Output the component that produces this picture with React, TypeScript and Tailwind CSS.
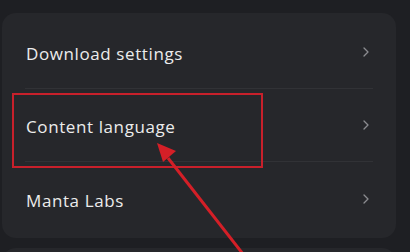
import React from "react";

const rows = ["Download settings", "Content language", "Manta Labs"];

const Chevron: React.FC = () => (
    <svg width="8" height="12" viewBox="0 0 8 12" fill="none" className="shrink-0">
        <path d="M2 2l4 4-4 4" stroke="#8b8c90" strokeWidth="1.3" strokeLinecap="round" strokeLinejoin="round" />
    </svg>
);

const App: React.FC = () => {
    return (
        <div className="relative w-[410px] h-[252px] overflow-hidden bg-[#1e1f23] pt-[13px] pl-[2px] font-['Open_Sans',sans-serif]">
            <div className="w-[394px] h-[225px] rounded-[14px] bg-[#26272b] pt-[3px] pl-[23px] pr-[23px]">
                {rows.map((label, i) => (
                    <div
                        key={label}
                        className={
                            "flex items-center justify-between h-[73px] pr-[3px] " +
                            (i < rows.length - 1 ? "border-b border-[#313236]" : "")
                        }
                    >
                        <span className="text-[17px] tracking-[0.6px] text-[#ececec] pl-px pt-[4px]">{label}</span>
                        <Chevron />
                    </div>
                ))}
            </div>
            <div className="mt-[10px] w-[394px] h-[20px] rounded-t-[14px] bg-[#26272b]" />

            {/* annotation */}
            <div className="absolute left-[12px] top-[93px] w-[251px] h-[75px] border-2 border-[#c8202b]" />
            <svg className="absolute left-0 top-0" width="410" height="252" viewBox="0 0 410 252">
                <line x1="243" y1="254" x2="168" y2="158" stroke="#d41f27" strokeWidth="3" />
                <polygon points="157,143 176,151 163,162" fill="#d41f27" />
            </svg>
        </div>
    );
};

export default App;
